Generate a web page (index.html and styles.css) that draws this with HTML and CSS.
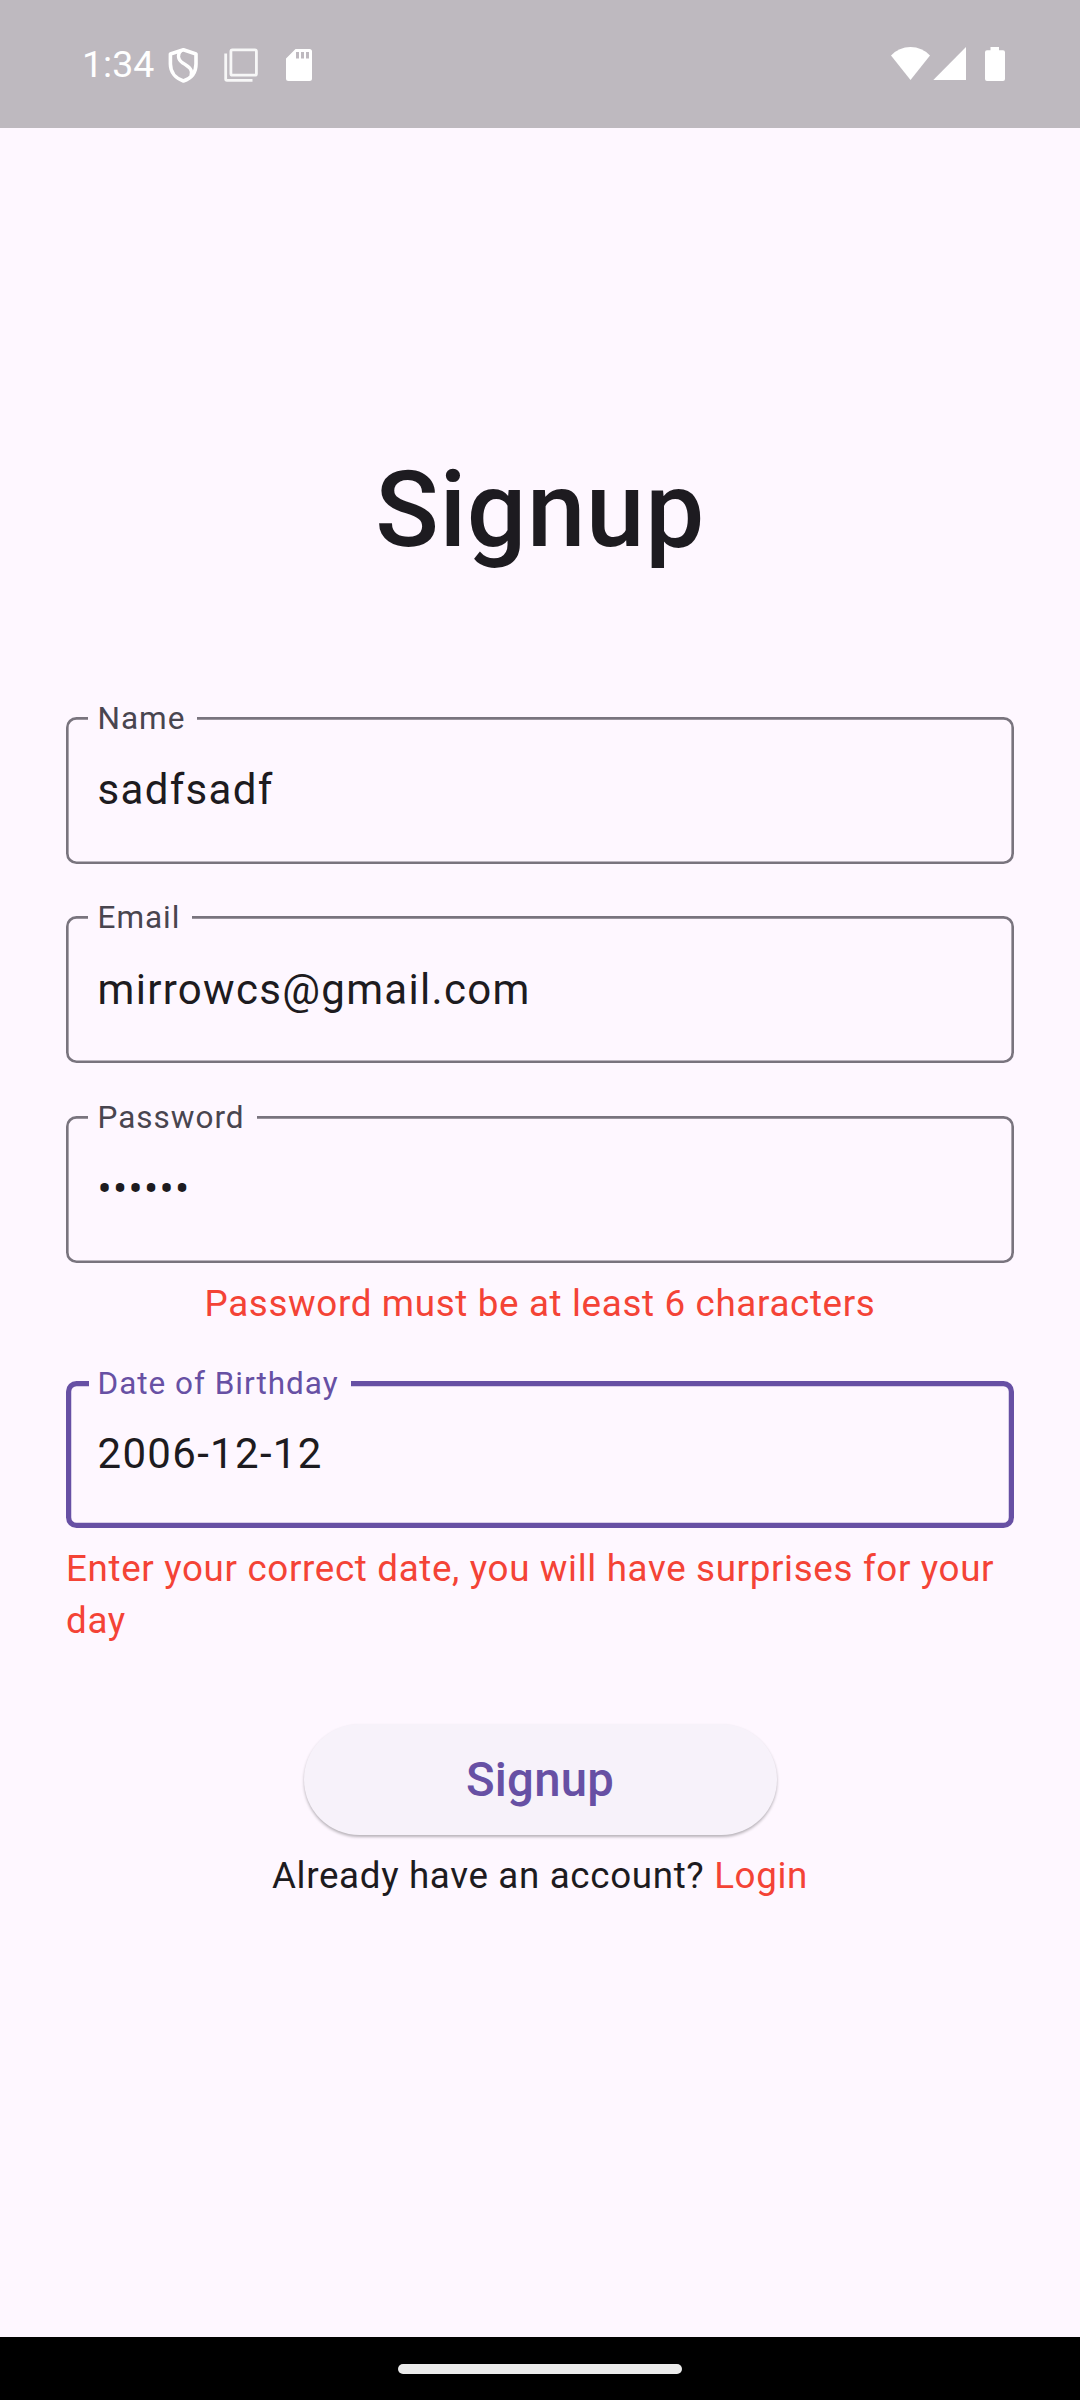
FILE: index.html
```html
<!DOCTYPE html>
<html lang="en">
<head>
<meta charset="utf-8">
<title>Signup</title>
<link rel="stylesheet" href="styles.css">
</head>
<body>
<div class="screen">
  <header class="status">
    <div class="status-left">
      <span class="clock">1:34</span>
      <svg class="shield" viewBox="168 47 31 37" width="31" height="37" fill="none" stroke="#fff" stroke-width="3.6" stroke-linejoin="round">
        <path d="M183.400 49.800 L196 54 V64 C196 72.500 191 78.500 183.400 81 C175.800 78.500 170.400 72.500 170.400 64 V54 Z"/>
        <path d="M181 50.500 C177 54.500 178 59.500 182 62.500 C190 67.500 193 69.500 191 76" stroke-width="3.3"/>
      </svg>
      <svg class="stack" viewBox="224 48 34 34" width="34" height="34" fill="none" stroke="#fff" stroke-opacity=".88" stroke-width="2.8">
        <rect x="230.900" y="49.900" width="25.500" height="25.300" rx="1.500"/>
        <path d="M225.700 53.500 V79 Q225.700 80.300 227 80.300 H252.500"/>
      </svg>
      <svg class="card" viewBox="286 49 26 32" width="26" height="32" fill="#fff">
        <path fill-rule="evenodd" d="M295.500 49 H309.500 Q312 49 312 51.500 V78.500 Q312 81 309.500 81 H288.500 Q286 81 286 78.500 V58.500 Z M296 52 V58.500 H299 V52 Z M301 52 V58.500 H304 V52 Z M306 52 V58.500 H309 V52 Z"/>
      </svg>
    </div>
    <div class="status-right">
      <svg class="wifi" viewBox="891 47 39 33" width="39" height="33" fill="#fff"><path d="M891 55.500 Q899 47 910.500 47 T930 55.500 L910.500 80 Z"/></svg>
      <svg class="signal" viewBox="933 47 33 33" width="33" height="33" fill="#fff"><path d="M966 47 V80 H933.300 Z"/></svg>
      <svg class="battery" viewBox="985 47 20 34" width="20" height="34" fill="#fff"><path d="M990.500 47 H999 V50.300 H1003 Q1005 50.300 1005 52.300 V79 Q1005 81 1003 81 H987 Q985 81 985 79 V52.300 Q985 50.300 987 50.300 H990.500 Z"/></svg>
    </div>
  </header>

  <main class="content">
    <h1 class="title">Signup</h1>
    <form class="form">
      <div class="field name"><label class="label">Name</label><span class="value">sadfsadf</span></div>
      <div class="field email"><label class="label">Email</label><span class="value">mirrowcs@gmail.com</span></div>
      <div class="field password"><label class="label">Password</label><span class="value">••••••</span></div>
      <p class="message centered">Password must be at least 6 characters</p>
      <div class="field focused"><label class="label">Date of Birthday</label><span class="value">2006-12-12</span></div>
      <p class="message">Enter your correct date, you will have surprises for your day</p>
      <button class="submit" type="button">Signup</button>
      <p class="account">Already have an account? <a class="login">Login</a></p>
    </form>
  </main>

  <footer class="navbar"><div class="handle"></div></footer>
</div>
</body>
</html>
```

FILE: styles.css
```css
* { box-sizing: border-box; }
body { margin: 0; font-family: Roboto, sans-serif; background: #fef7ff; }
.screen {
  width: 1080px;
  height: 2400px;
  display: flex;
  flex-direction: column;
  background: #fef7ff;
  color: #1d1b20;
}
.status {
  height: 128px;
  flex: none;
  display: flex;
  justify-content: space-between;
  padding: 0 75px 0 82px;
  background: #beb9bf;
}
.status-left, .status-right { display: flex; align-items: flex-start; }
.clock { width: 86px; margin-top: 42px; font-size: 37.5px; line-height: 44px; color: #fff; }
.shield { margin-top: 47px; }
.stack { margin: 48px 0 0 25px; }
.card { margin: 49px 0 0 28px; }
.wifi { margin-top: 47px; }
.signal { margin: 47px 0 0 3px; }
.battery { margin: 47px 0 0 19px; }

.content { flex: 1; padding: 321px 66px 0; }
.title {
  margin: 0 0 145px;
  font-size: 105px;
  line-height: 123px;
  font-weight: 500;
  letter-spacing: .656px;
  text-align: center;
}
.form { display: flex; flex-direction: column; }
.field {
  position: relative;
  height: 147px;
  border-radius: 10.5px;
  box-shadow: inset 0 0 0 2.625px #79747e;
  padding: 0 31.5px;
}
.label {
  position: absolute;
  left: 22px;
  top: -16px;
  padding: 0 12px 0 9.5px;
  background: #fef7ff;
  color: #49454f;
  font-size: 31.5px;
  line-height: 36px;
  letter-spacing: .984px;
}
.value { display: block; font-size: 42px; line-height: 145px; letter-spacing: 1.3125px; }
.email { margin-top: 52px; }
.email .value { line-height: 147px; }
.password { margin-top: 53px; }
.focused { box-shadow: inset 0 0 0 5.25px #6750a4; }
.focused .label { left: 23px; top: -15px; padding-left: 8.5px; color: #6750a4; }
.message {
  margin: 15px 0 0;
  color: #f44336;
  font-size: 36.75px;
  line-height: 52px;
  letter-spacing: .656px;
}
.centered { margin: 15px 0 51px; text-align: center; }
.submit {
  align-self: center;
  width: 473px;
  height: 111px;
  margin-top: 77px;
  padding: 2px 0 0;
  border: 0;
  border-radius: 56px;
  background: #f7f2fa;
  box-shadow: 0 2px 3px rgba(0, 0, 0, .28);
  color: #6750a4;
  font: 500 47.25px/109px Roboto, sans-serif;
  letter-spacing: .2625px;
}
.account { margin: 15px 0 0; text-align: center; font-size: 36.75px; line-height: 52px; letter-spacing: .656px; }
.login { color: #f44336; }

.navbar { flex: none; height: 63px; background: #000; padding-top: 27px; }
.handle { width: 284px; height: 10px; margin: 0 auto; border-radius: 5px; background: #ebebeb; }
```
